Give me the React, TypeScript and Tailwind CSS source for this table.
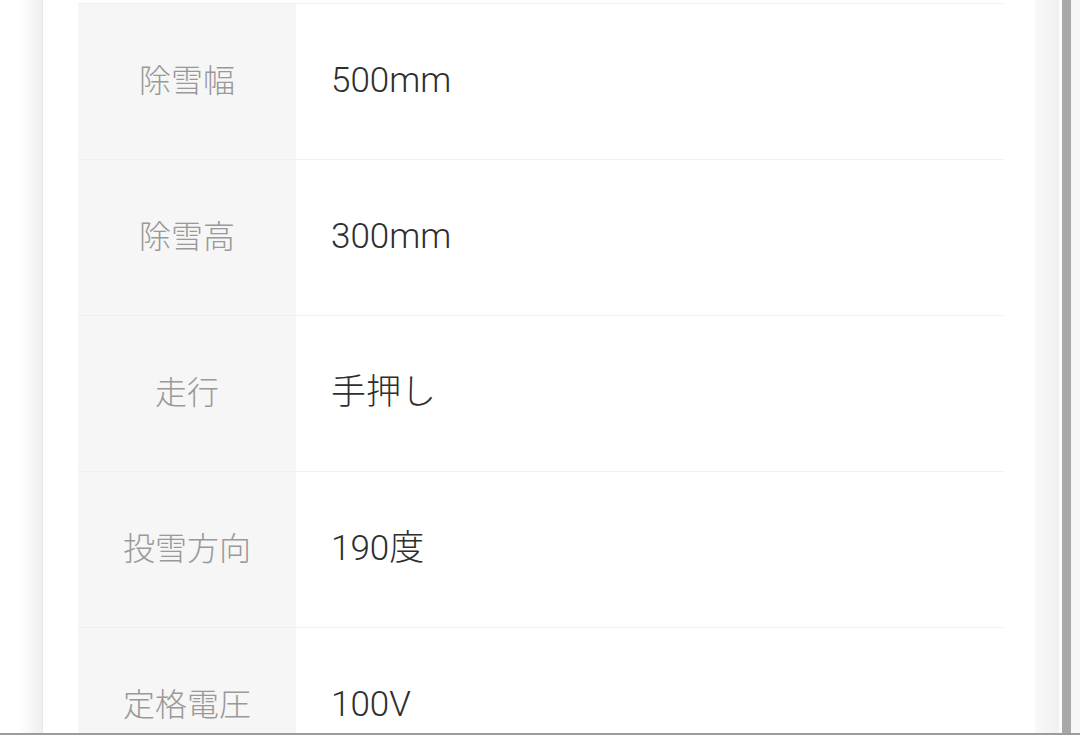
import React from "react";

const rows: [string, string][] = [
  ["除雪幅", "500mm"],
  ["除雪高", "300mm"],
  ["走行", "手押し"],
  ["投雪方向", "190度"],
  ["定格電圧", "100V"],
];

export default function App() {
  return (
    <div
      className="relative flex h-[735px] w-[1080px] overflow-hidden bg-white"
      style={{ fontFamily: 'Roboto, "Noto Sans CJK JP", sans-serif' }}
    >
      <div className="h-full w-[42px] bg-gradient-to-r from-white from-[45%] to-[#efefef]" />
      <div className="h-full w-px bg-[#e9e9e9]" />
      <div className="h-full w-[992px] bg-white pl-[35px] pr-[32px]">
        <div className="mt-[3px] flex flex-col">
          {rows.map(([k, v], i) => (
            <div key={i} className="flex h-[156px] shrink-0 border-t border-[#efefef]">
              <div className="flex w-[218px] items-center justify-center bg-[#f6f6f6] pb-[2px] text-[32px] font-light text-[#999999]">
                {k}
              </div>
              <div className="flex flex-1 items-center pl-[35px] text-[35px] font-light text-[#2e2e2e]">
                {v}
              </div>
            </div>
          ))}
        </div>
      </div>
      <div className="h-full w-[24px] bg-gradient-to-r from-[#f9f9f9] to-[#f0f0f0]" />
      <div className="h-full w-[3px] bg-[#fbfbfb]" />
      <div className="h-full w-[9px] bg-[#a8a8a8]" />
      <div className="h-full flex-1 bg-[#f7f7f7]" />
      <div className="absolute bottom-0 left-0 h-[2px] w-full bg-[#9c9c9c]" />
    </div>
  );
}
